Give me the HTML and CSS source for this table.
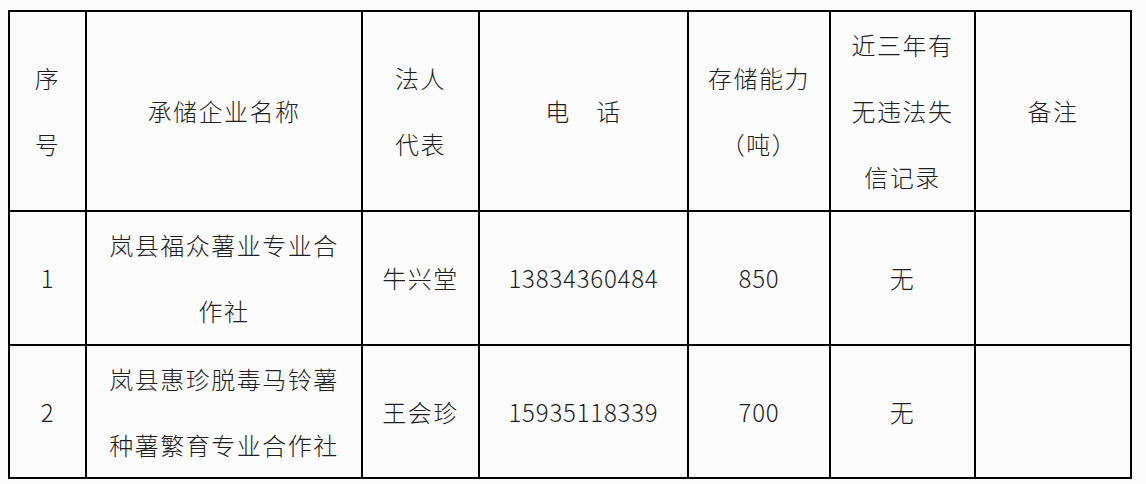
FILE: index.html
```html
<!DOCTYPE html>
<html lang="zh-CN">
<head>
<meta charset="utf-8">
<title>承储企业名单</title>
<link rel="stylesheet" href="styles.css">
</head>
<body>
<div class="sheet">
  <div class="cell">序<br>号</div>
  <div class="cell">承储企业名称</div>
  <div class="cell">法人<br>代表</div>
  <div class="cell">电　话</div>
  <div class="cell">存储能力<br>（吨）</div>
  <div class="cell">近三年有<br>无违法失<br>信记录</div>
  <div class="cell">备注</div>

  <div class="cell num">1</div>
  <div class="cell name">岚县福众薯业专业合作社</div>
  <div class="cell">牛兴堂</div>
  <div class="cell num">13834360484</div>
  <div class="cell num">850</div>
  <div class="cell">无</div>
  <div class="cell"></div>

  <div class="cell num">2</div>
  <div class="cell name">岚县惠珍脱毒马铃薯种薯繁育专业合作社</div>
  <div class="cell">王会珍</div>
  <div class="cell num">15935118339</div>
  <div class="cell num">700</div>
  <div class="cell">无</div>
  <div class="cell"></div>
</div>
</body>
</html>
```
FILE: styles.css
```css
html, body {
  margin: 0;
  padding: 0;
  background: #fdfcfd;
}

body {
  font-family: "Noto Sans CJK SC", "Noto Sans", sans-serif;
  font-weight: 300;
  color: #1e1e1e;
}

.sheet {
  display: grid;
  grid-template-columns: 77px 276px 117px 209px 142px 145px 156px;
  grid-template-rows: 200px 134px 133px;
  width: max-content;
  margin: 10px 0 0 8px;
  border-left: 2px solid #000;
  border-top: 2px solid #000;
}

.cell {
  box-sizing: border-box;
  border-right: 2px solid #000;
  border-bottom: 2px solid #000;
  display: flex;
  align-items: center;
  justify-content: center;
  text-align: center;
  font-size: 24px;
  line-height: 66px;
  letter-spacing: 1.5px;
  padding-top: 0;
}

.name {
  padding-left: 20px;
  padding-right: 20px;
}

.num {
  letter-spacing: 0.8px;
}
```
